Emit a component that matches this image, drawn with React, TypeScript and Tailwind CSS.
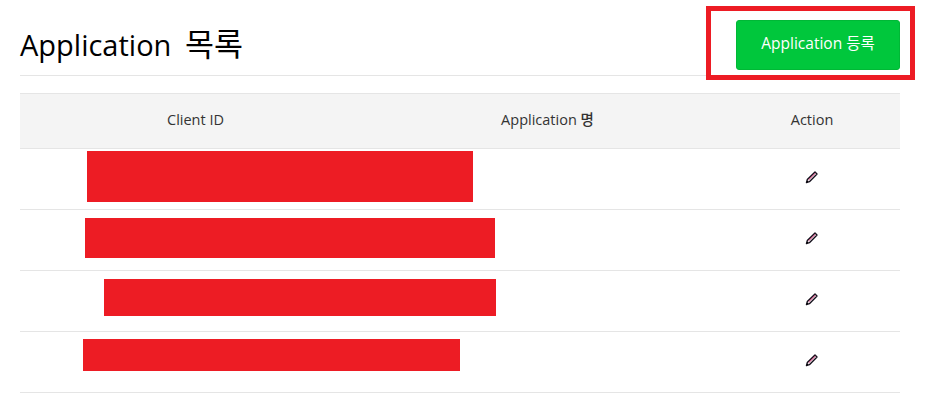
const FONT = "font-['Open_Sans','Noto_Sans_CJK_KR',sans-serif]";

function Pencil() {
    return (
        <svg width="14" height="14" viewBox="0 0 14 14" fill="none">
            <path d="M1.5 12.5 L2.3 9.6 L10 2 L12 4 L4.4 11.7 Z" fill="#fff" stroke="#15101c" strokeWidth="1.4" strokeLinejoin="round" />
            <path d="M3.6 9.8 L10.3 3.2" stroke="#c2185b" strokeWidth="1" />
            <path d="M1.5 12.5 L2.2 10.5 L3.5 11.8 Z" fill="#000" />
        </svg>
    );
}

function Row({ redact }: { redact: string }) {
    return (
        <div className="relative grid grid-cols-[704px_1fr] h-[61px] border-b border-[#e5e5e5]">
            <div></div>
            <div className="flex items-center justify-center pb-[4px]"><Pencil /></div>
            <div className={`absolute bg-[#ed1c24] ${redact}`}></div>
        </div>
    );
}

function App() {
    return (
        <div className={`w-[940px] h-[401px] bg-white overflow-hidden relative pl-[20px] pr-[40px] text-[#333] ${FONT}`}>
            <div className="flex justify-between items-start h-[76px] border-b border-[#e5e5e5] pt-[20px]">
                <div className="text-[29px] leading-[48px] text-black">Application <span className="text-[31.5px] ml-[6px]">목록</span></div>
                <button className="w-[164px] h-[50px] pb-[3px] bg-[#00c73c] border border-[#00b836] rounded-[3px] text-white text-[15.5px]">Application 등록</button>
            </div>

            <div className="mt-[17px] grid grid-cols-[351px_353px_176px] h-[56px] pb-[2px] items-center text-center text-[14.5px] font-medium text-[#333] bg-[#f4f4f4] border-y border-[#e5e5e5]">
                <div>Client ID</div>
                <div>Application 명</div>
                <div>Action</div>
            </div>

            <Row redact="left-[67px] top-[2px] w-[386px] h-[51px]" />
            <Row redact="left-[65px] top-[8px] w-[410px] h-[40px]" />
            <Row redact="left-[84px] top-[8px] w-[392px] h-[37px]" />
            <Row redact="left-[63px] top-[7px] w-[377px] h-[32px]" />

            <div className="absolute left-[706px] top-[6px] w-[209px] h-[74px] border-[5px] border-[#ed1c24]"></div>
        </div>
    );
}

export default App;
